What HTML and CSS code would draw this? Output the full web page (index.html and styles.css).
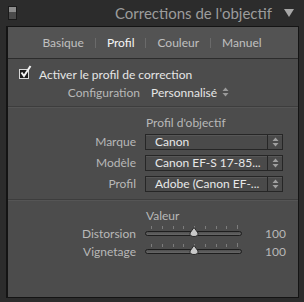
FILE: index.html
```html
<!DOCTYPE html>
<html>
<head>
  <title>Corrections de l'objectif</title>
  <meta name="viewport" content="width=device-width, initial-scale=1">
  <link rel="stylesheet" href="styles.css">
</head>
<body>
  <div class="header">
    <span class="toggle"></span>
    <span class="title">Corrections de l'objectif</span>
    <svg class="caret" width="10" height="8" viewBox="0 0 10 8"><path d="M0 0 H10 L5 8 Z" fill="#a8a8a8"/></svg>
  </div>

  <div class="panel">
    <div class="tabs">
      <span class="tab">Basique</span>
      <span class="sep"></span>
      <span class="tab active">Profil</span>
      <span class="sep"></span>
      <span class="tab">Couleur</span>
      <span class="sep"></span>
      <span class="tab">Manuel</span>
    </div>

    <div class="section enable">
      <div class="check">
        <span class="box">
          <svg width="14" height="14" viewBox="0 0 14 14"><path d="M2.5 7.5 L5 11 L11.5 1" fill="none" stroke="#f2f2f2" stroke-width="2"/></svg>
        </span>
        <span>Activer le profil de correction</span>
      </div>
      <div class="config">
        <span class="label">Configuration</span>
        <span class="popup">Personnalisé
          <svg width="7" height="10" viewBox="0 0 7 10"><path d="M3.5 0.5 L6.5 4 H0.5 Z M3.5 9.5 L6.5 6 H0.5 Z" fill="#9a9a9a"/></svg>
        </span>
      </div>
    </div>

    <div class="section lens">
      <div class="row heading-row"><span></span><span class="heading">Profil d'objectif</span></div>
      <div class="row">
        <span class="label">Marque</span>
        <div class="select"><span class="value">Canon</span><span class="step"><svg width="7" height="10" viewBox="0 0 7 10"><path d="M3.5 0.5 L6.5 4 H0.5 Z M3.5 9.5 L6.5 6 H0.5 Z" fill="#a0a0a0"/></svg></span></div>
      </div>
      <div class="row">
        <span class="label">Modèle</span>
        <div class="select"><span class="value">Canon EF-S 17-85...</span><span class="step"><svg width="7" height="10" viewBox="0 0 7 10"><path d="M3.5 0.5 L6.5 4 H0.5 Z M3.5 9.5 L6.5 6 H0.5 Z" fill="#a0a0a0"/></svg></span></div>
      </div>
      <div class="row">
        <span class="label">Profil</span>
        <div class="select"><span class="value">Adobe (Canon EF-...</span><span class="step"><svg width="7" height="10" viewBox="0 0 7 10"><path d="M3.5 0.5 L6.5 4 H0.5 Z M3.5 9.5 L6.5 6 H0.5 Z" fill="#a0a0a0"/></svg></span></div>
      </div>
    </div>

    <div class="section amount">
      <div class="row heading-row"><span></span><span class="heading">Valeur</span></div>
      <div class="slider-row">
        <span class="label">Distorsion</span>
        <div class="slider">
          <div class="ticks"><i></i><i></i><i></i><i></i><i></i><i></i><i></i><i></i><i class="end"></i></div>
          <div class="track"></div>
          <svg class="thumb" style="left: 50%" width="10" height="10" viewBox="0 0 10 10"><path d="M5 0.5 L9 6 Q9.3 9.5 5 9.5 Q0.7 9.5 1 6 Z" fill="#c9c9c9" stroke="#2a2a2a" stroke-width="1"/></svg>
        </div>
        <span class="num">100</span>
      </div>
      <div class="slider-row">
        <span class="label">Vignetage</span>
        <div class="slider">
          <div class="ticks"><i></i><i></i><i></i><i></i><i></i><i></i><i></i><i></i><i class="end"></i></div>
          <div class="track"></div>
          <svg class="thumb" style="left: 50%" width="10" height="10" viewBox="0 0 10 10"><path d="M5 0.5 L9 6 Q9.3 9.5 5 9.5 Q0.7 9.5 1 6 Z" fill="#c9c9c9" stroke="#2a2a2a" stroke-width="1"/></svg>
        </div>
        <span class="num">100</span>
      </div>
    </div>
  </div>
</body>
</html>
```

FILE: styles.css
```css
body {
  margin: 0;
  background: #2c2c2c;
  font-family: Lato, 'Open Sans', sans-serif;
  font-size: 12px;
  color: #b8b8b8;
  width: 304px;
  height: 302px;
  overflow: hidden;
}

.header {
  height: 26px;
  display: flex;
  align-items: center;
  padding: 0 10px 0 8px;
}

.toggle {
  width: 7px;
  height: 12px;
  border: 1px solid #1a1a1a;
  background: linear-gradient(#8c8c8c 0, #8c8c8c 45%, #4a4a4a 45%, #4a4a4a 100%);
}

.title {
  margin-left: auto;
  font-size: 15px;
  color: #9c9c9c;
}

.caret {
  margin-left: 12px;
}

.panel {
  margin: 0 5px 0 6px;
  height: 270px;
  border: 1px solid #141414;
  border-width: 1px 1px 1px 2px;
  background: #4c4c4c;
}

.tabs {
  height: 31px;
  background: #535353;
  border-bottom: 1px solid #2c2c2c;
  display: flex;
  align-items: center;
  justify-content: center;
  gap: 11px;
  padding-right: 2px;
}

.tab {
  color: #c0c0c0;
}

.tab.active {
  color: #f6f6f6;
}

.sep {
  width: 1px;
  height: 10px;
  background: #6a6a6a;
}

.section {
  border-bottom: 1px solid #3d3d3d;
  box-shadow: 0 1px 0 #555;
}

.enable {
  padding: 6px 0 5px;
}

.check {
  height: 18px;
  display: flex;
  align-items: center;
  padding-left: 11px;
  color: #e6e6e6;
}

.box {
  position: relative;
  width: 8px;
  height: 8px;
  border: 1px solid #d8d8d8;
  background: #1c1c1c;
  margin-right: 10px;
}

.box svg {
  position: absolute;
  left: -1px;
  top: -5px;
}

.config {
  height: 18px;
  display: grid;
  grid-template-columns: 132px 1fr;
  column-gap: 11px;
  align-items: center;
}

.label {
  text-align: right;
}

.popup {
  color: #e6e6e6;
  display: flex;
  align-items: center;
  gap: 5px;
}

.lens {
  padding: 6px 0 5px;
}

.row {
  height: 21px;
  display: grid;
  grid-template-columns: 128px 138px;
  column-gap: 9px;
  align-items: center;
}

.heading-row {
  height: 18px;
}

.heading {
  padding-left: 1px;
}

.select {
  height: 14px;
  border: 1px solid #262626;
  background: #4a4a4a;
  box-shadow: inset 0 1px 0 #575757;
  display: flex;
  align-items: center;
  color: #e8e8e8;
}

.select .value {
  flex: 1;
  padding-left: 9px;
  white-space: nowrap;
  overflow: hidden;
}

.step {
  width: 14px;
  height: 14px;
  border-left: 1px solid #262626;
  display: flex;
  align-items: center;
  justify-content: center;
}

.amount {
  border: none;
  box-shadow: none;
  padding-top: 6px;
}

.slider-row {
  height: 18px;
  display: grid;
  grid-template-columns: 128px 97px 1fr;
  column-gap: 9px;
  align-items: center;
}

.slider {
  position: relative;
  height: 18px;
}

.ticks {
  position: absolute;
  left: 6px;
  right: 4px;
  top: 1px;
  display: flex;
  justify-content: space-between;
  align-items: flex-end;
  height: 4px;
}

.ticks i {
  width: 1px;
  height: 3px;
  background: #7c7c7c;
}

.ticks i.end {
  height: 4px;
}

.track {
  position: absolute;
  left: 0;
  right: 0;
  top: 7px;
  height: 3px;
  border: 1px solid #1e1e1e;
  border-radius: 3px;
  background: linear-gradient(#505050, #666);
}

.thumb {
  position: absolute;
  top: 3px;
  margin-left: -5px;
}

.num {
  text-align: right;
  padding-right: 12px;
}
```
